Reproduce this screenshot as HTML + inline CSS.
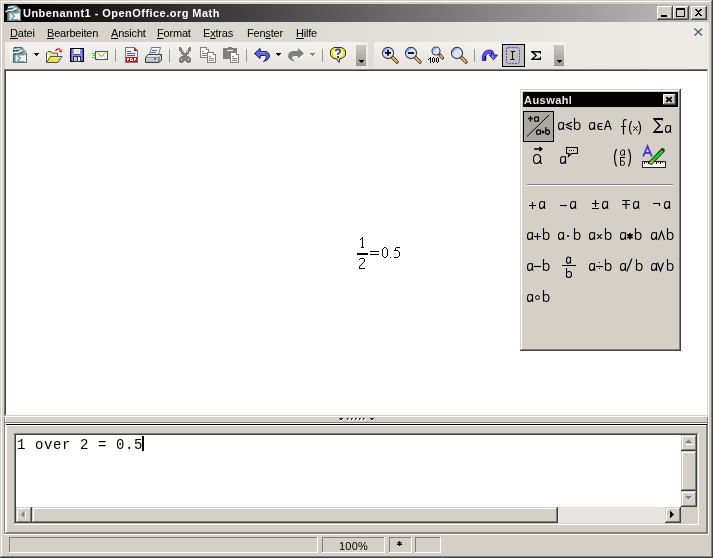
<!DOCTYPE html>
<html><head><meta charset="utf-8">
<style>
*{margin:0;padding:0;box-sizing:border-box}
html,body{width:713px;height:558px;overflow:hidden;background:#d4d0c8}
body{position:relative;font-family:"Liberation Sans",sans-serif;font-size:11px;color:#000}
.a{position:absolute}
.t{position:absolute;white-space:nowrap;line-height:1}
svg{position:absolute;overflow:visible}
.t{will-change:transform}
</style></head><body>
<div class="a" style="left:0px;top:0px;width:712px;height:1px;background:#d4d0c8"></div>
<div class="a" style="left:0px;top:0px;width:1px;height:557px;background:#d4d0c8"></div>
<div class="a" style="left:1px;top:1px;width:710px;height:1px;background:#fff"></div>
<div class="a" style="left:1px;top:1px;width:1px;height:555px;background:#fff"></div>
<div class="a" style="left:0px;top:557px;width:713px;height:1px;background:#404040"></div>
<div class="a" style="left:712px;top:0px;width:1px;height:558px;background:#404040"></div>
<div class="a" style="left:1px;top:556px;width:711px;height:1px;background:#808080"></div>
<div class="a" style="left:711px;top:1px;width:1px;height:556px;background:#808080"></div>
<div class="a" style="left:4px;top:4px;width:705px;height:18px;background:linear-gradient(to right,#000 0%,#c0c0c0 100%)"></div>
<svg style="left:6px;top:5px" width="16" height="16" viewBox="0 0 16 16" >
<defs><linearGradient id="mtt" x1="0" y1="0" x2="1" y2="0"><stop offset="0" stop-color="#1f4a52"/><stop offset="0.55" stop-color="#4a7076"/><stop offset="1" stop-color="#c0c8c8"/></linearGradient>
<linearGradient id="mlt" x1="0" y1="0" x2="1" y2="0"><stop offset="0" stop-color="#2a5c64"/><stop offset="1" stop-color="#c8d8d6"/></linearGradient></defs>
<path d="M1.5 15.5 L1.5 7 L14.5 7 L14.5 15.5 Z" fill="#f0f4f3" stroke="#3a6268" stroke-width="1"/>
<rect x="1" y="7" width="3.5" height="9" fill="url(#mlt)"/>
<path d="M1 7.5 L1 4 L2 0 L10 0 L15 5 L15 7.5 Z" fill="url(#mtt)"/>
<path d="M-0.5 6.8 Q3 4.6 5.5 5.6 Q8 4.2 10.5 3" fill="none" stroke="#fff" stroke-width="1.5"/>
<path d="M2 2.6 Q5 1.2 8.5 2.2" fill="none" stroke="#fff" stroke-width="1.3"/>
<path d="M5 7.8 L12.5 7.8 M5.5 8.5 L8.3 11.2 L5.5 14 M5 14.7 L12.5 14.7" fill="none" stroke="#7a9c8e" stroke-width="1.4"/>
<path d="M14.5 6 L14.5 15.5" stroke="#50707a" stroke-width="1"/>
<path d="M1 15.5 L15 15.5" stroke="#587a80" stroke-width="1"/>
</svg>
<div class="t" style="left:23px;top:8px;color:#fff;font-weight:bold;letter-spacing:0.46px">Unbenannt1 - OpenOffice.org Math</div>
<div class="a" style="left:657px;top:6px;width:16px;height:14px;background:#d4d0c8"></div>
<div class="a" style="left:657px;top:6px;width:15px;height:1px;background:#fff"></div>
<div class="a" style="left:657px;top:6px;width:1px;height:13px;background:#fff"></div>
<div class="a" style="left:657px;top:19px;width:16px;height:1px;background:#404040"></div>
<div class="a" style="left:672px;top:6px;width:1px;height:14px;background:#404040"></div>
<div class="a" style="left:658px;top:18px;width:14px;height:1px;background:#808080"></div>
<div class="a" style="left:671px;top:7px;width:1px;height:12px;background:#808080"></div>
<svg style="left:657px;top:6px" width="16" height="14" viewBox="0 0 16 14" shape-rendering="crispEdges"><rect x="4" y="9" width="6" height="2" fill="#000"/></svg>
<div class="a" style="left:673px;top:6px;width:16px;height:14px;background:#d4d0c8"></div>
<div class="a" style="left:673px;top:6px;width:15px;height:1px;background:#fff"></div>
<div class="a" style="left:673px;top:6px;width:1px;height:13px;background:#fff"></div>
<div class="a" style="left:673px;top:19px;width:16px;height:1px;background:#404040"></div>
<div class="a" style="left:688px;top:6px;width:1px;height:14px;background:#404040"></div>
<div class="a" style="left:674px;top:18px;width:14px;height:1px;background:#808080"></div>
<div class="a" style="left:687px;top:7px;width:1px;height:12px;background:#808080"></div>
<svg style="left:673px;top:6px" width="16" height="14" viewBox="0 0 16 14" shape-rendering="crispEdges"><rect x="3.5" y="2.5" width="8" height="8" fill="none" stroke="#000"/><rect x="3" y="2" width="9" height="2" fill="#000"/></svg>
<div class="a" style="left:691px;top:6px;width:16px;height:14px;background:#d4d0c8"></div>
<div class="a" style="left:691px;top:6px;width:15px;height:1px;background:#fff"></div>
<div class="a" style="left:691px;top:6px;width:1px;height:13px;background:#fff"></div>
<div class="a" style="left:691px;top:19px;width:16px;height:1px;background:#404040"></div>
<div class="a" style="left:706px;top:6px;width:1px;height:14px;background:#404040"></div>
<div class="a" style="left:692px;top:18px;width:14px;height:1px;background:#808080"></div>
<div class="a" style="left:705px;top:7px;width:1px;height:12px;background:#808080"></div>
<svg style="left:691px;top:6px" width="16" height="14" viewBox="0 0 16 14" shape-rendering="crispEdges"><path d="M4 3 L5.5 3 L7.5 5.5 L9.5 3 L11 3 L8.3 6.5 L11 10 L9.5 10 L7.5 7.5 L5.5 10 L4 10 L6.7 6.5 Z" fill="#000"/></svg>
<div class="a" style="left:4px;top:22px;width:705px;height:47px;background:linear-gradient(to right,#d4d0c8 0%,#dcd9d3 40%,#ebe8e4 80%,#eeebe7 100%)"></div>
<div class="t" style="left:10px;top:28px;letter-spacing:-0.2px"><span style="text-decoration:underline">D</span>atei</div>
<div class="t" style="left:47px;top:28px;letter-spacing:-0.2px"><span style="text-decoration:underline">B</span>earbeiten</div>
<div class="t" style="left:111px;top:28px;letter-spacing:-0.2px"><span style="text-decoration:underline">A</span>nsicht</div>
<div class="t" style="left:157px;top:28px;letter-spacing:-0.2px"><span style="text-decoration:underline">F</span>ormat</div>
<div class="t" style="left:203px;top:28px;letter-spacing:-0.2px">E<span style="text-decoration:underline">x</span>tras</div>
<div class="t" style="left:247px;top:28px;letter-spacing:-0.2px">Fen<span style="text-decoration:underline">s</span>ter</div>
<div class="t" style="left:296px;top:28px;letter-spacing:-0.2px"><span style="text-decoration:underline">H</span>ilfe</div>
<svg style="left:694px;top:28px" width="9" height="8" viewBox="0 0 9 8" ><path d="M0.5 0.5 L8 7.5 M8 0.5 L0.5 7.5" stroke="#545c7c" stroke-width="1.4"/></svg>
<div class="a" style="left:5px;top:42px;width:363px;height:27px;background:linear-gradient(#f4f2f0,#e6e3de)"></div>
<div class="a" style="left:374px;top:42px;width:192px;height:27px;background:linear-gradient(#f4f2f0,#e6e3de)"></div>
<svg style="left:12px;top:47px" width="16" height="16" viewBox="0 0 16 16" >
<defs><linearGradient id="mtb" x1="0" y1="0" x2="1" y2="0"><stop offset="0" stop-color="#1f4a52"/><stop offset="0.55" stop-color="#4a7076"/><stop offset="1" stop-color="#c0c8c8"/></linearGradient>
<linearGradient id="mlb" x1="0" y1="0" x2="1" y2="0"><stop offset="0" stop-color="#2a5c64"/><stop offset="1" stop-color="#c8d8d6"/></linearGradient></defs>
<path d="M1.5 15.5 L1.5 7 L14.5 7 L14.5 15.5 Z" fill="#f0f4f3" stroke="#3a6268" stroke-width="1"/>
<rect x="1" y="7" width="3.5" height="9" fill="url(#mlb)"/>
<path d="M1 7.5 L1 4 L2 0 L10 0 L15 5 L15 7.5 Z" fill="url(#mtb)"/>
<path d="M-0.5 6.8 Q3 4.6 5.5 5.6 Q8 4.2 10.5 3" fill="none" stroke="#fff" stroke-width="1.5"/>
<path d="M2 2.6 Q5 1.2 8.5 2.2" fill="none" stroke="#fff" stroke-width="1.3"/>
<path d="M5 7.8 L12.5 7.8 M5.5 8.5 L8.3 11.2 L5.5 14 M5 14.7 L12.5 14.7" fill="none" stroke="#7a9c8e" stroke-width="1.4"/>
<path d="M14.5 6 L14.5 15.5" stroke="#50707a" stroke-width="1"/>
<path d="M1 15.5 L15 15.5" stroke="#587a80" stroke-width="1"/>
</svg>
<svg style="left:34px;top:53px" width="5" height="3" viewBox="0 0 5 3" shape-rendering="crispEdges"><rect x="0" y="0" width="5" height="1" fill="#000"/><rect x="1" y="1" width="3" height="1" fill="#000"/><rect x="2" y="2" width="1" height="1" fill="#000"/></svg>
<svg style="left:45px;top:47px" width="18" height="16" viewBox="0 0 18 16" >
<path d="M1.5 15 L1.5 6 L3 4.5 L6 4.5 L7.2 6.2 L12.5 6.2 L12.5 9.5" fill="#f2ea78" stroke="#464e78" stroke-width="1"/>
<path d="M2.2 6.3 L2.2 14 L3.8 11.5 L3.8 6.3 Z" fill="#ffffff"/>
<path d="M1.5 15.5 L5.5 9.5 L17 9.5 L12.8 15.5 Z" fill="#ece63a" stroke="#464e78" stroke-width="1" stroke-linejoin="round"/>
<path d="M6.5 10.8 L15 10.8" stroke="#f8f490" stroke-width="1"/>
<path d="M10.5 3.8 Q12.8 0.8 15.4 2.6" fill="none" stroke="#e00000" stroke-width="1.1"/>
<path d="M13.8 4.6 L16.8 2.2 L16.6 5.8 Z" fill="#e00000"/>
</svg>
<svg style="left:69px;top:47px" width="16" height="16" viewBox="0 0 16 16" shape-rendering="crispEdges">
<rect x="1" y="1" width="14" height="14" fill="#000"/>
<rect x="2" y="2" width="12" height="12" fill="#5050e0"/>
<rect x="3" y="2" width="10" height="12" fill="#8888fc"/>
<rect x="5" y="2" width="6" height="6" fill="#4040d0"/>
<rect x="5" y="2" width="6" height="5" fill="#f8f8f0"/>
<rect x="6" y="3" width="4" height="3" fill="#e4e4e4"/>
<rect x="4" y="9" width="8" height="6" fill="#303038"/>
<rect x="5" y="10" width="3" height="4" fill="#c4c4cc"/>
<rect x="9" y="10" width="2" height="4" fill="#f8f8f8"/>
</svg>
<svg style="left:92px;top:47px" width="18" height="16" viewBox="0 0 18 16" >
<rect x="0" y="6" width="3" height="1" fill="#20d020"/>
<rect x="1" y="8" width="3" height="1" fill="#20d020"/>
<rect x="0" y="10" width="3" height="1" fill="#20d020"/>
<rect x="3.5" y="4.5" width="12" height="8" fill="#fffff0" stroke="#505670" stroke-width="1.1"/>
<path d="M4.5 5 L9.5 9.5 L14.5 5" fill="none" stroke="#68708a" stroke-width="1"/>
<path d="M4.5 12 L8 8.5 M14.5 12 L11 8.5" fill="none" stroke="#c8b860" stroke-width="0.9"/>
<rect x="4.5" y="5.5" width="10" height="1" fill="#f8f0a0"/>
</svg>
<div class="a" style="left:115px;top:49px;width:1px;height:13px;background:#9a9a9a"></div>
<svg style="left:124px;top:47px" width="16" height="16" viewBox="0 0 16 16" shape-rendering="crispEdges">
<path d="M1.5 0.5 L10.5 0.5 L13.5 3.5 L13.5 15.5 L1.5 15.5 Z" fill="#fff" stroke="#707888" stroke-width="1"/>
<path d="M10 1 L13 4 L10 4 Z" fill="#e80000"/>
<rect x="3" y="4" width="4" height="1" fill="#5050d0"/>
<rect x="3" y="6" width="8" height="1" fill="#5050d0"/>
<rect x="3" y="8" width="8" height="1" fill="#5050d0"/>
<rect x="2" y="10" width="11" height="5" fill="#e80000"/>
<g fill="#fff"><rect x="3" y="11" width="1" height="3"/><rect x="4" y="11" width="1" height="2"/>
<rect x="6" y="11" width="1" height="3"/><rect x="7" y="11" width="1" height="1"/><rect x="7" y="13" width="1" height="1"/><rect x="8" y="11.5" width="1" height="2"/>
<rect x="10" y="11" width="1" height="3"/><rect x="11" y="11" width="1" height="1"/><rect x="11" y="12" width="0.6" height="1"/></g>
</svg>
<svg style="left:145px;top:47px" width="18" height="16" viewBox="0 0 18 16" >
<defs><linearGradient id="prg" x1="0" y1="0" x2="0" y2="1"><stop offset="0" stop-color="#f0f0f4"/><stop offset="1" stop-color="#b4b8c4"/></linearGradient></defs>
<path d="M6.5 0.5 L15.5 0.5 L13.5 7.5 L4.5 7.5 Z" fill="#fff" stroke="#707480" stroke-width="1"/>
<rect x="7" y="3" width="5" height="1" fill="#5050d0"/>
<rect x="6" y="5" width="5" height="1" fill="#5050d0"/>
<path d="M0.5 10.5 L3 7.5 L16.5 7.5 L16.5 13 L14 15.5 L0.5 15.5 Z" fill="url(#prg)" stroke="#383840" stroke-width="1" stroke-linejoin="round"/>
<path d="M1 10.5 L14 10.5 L16 8" fill="none" stroke="#8a8e98" stroke-width="1"/>
<path d="M14 10.5 L14 15.5" stroke="#50545c" stroke-width="1"/>
<rect x="9" y="11" width="2" height="2" fill="#10c010"/>
</svg>
<div class="a" style="left:169px;top:49px;width:1px;height:13px;background:#9a9a9a"></div>
<svg style="left:177px;top:47px" width="16" height="16" viewBox="0 0 16 16" shape-rendering="crispEdges">
<path d="M2 0 L4 0 L8 7 L12 0 L14 0 L14 3 L10 9 L11 9 L14 11 L14 15 L12 16 L10 16 L8 13 L6 16 L4 16 L2 15 L2 11 L5 9 L6 9 L2 3 Z" fill="#808080"/>
<rect x="5" y="4" width="1" height="1" fill="#fff"/><rect x="10" y="4" width="1" height="1" fill="#fff"/>
<rect x="4" y="12" width="1" height="1" fill="#fff"/><rect x="11" y="12" width="1" height="1" fill="#fff"/>
</svg>
<svg style="left:200px;top:47px" width="18" height="17" viewBox="0 0 18 17" shape-rendering="crispEdges"><path d="M0.5 0.5 L6.5 0.5 L8.5 2.5 L8.5 10.5 L0.5 10.5 Z" fill="#fff" stroke="#808080" stroke-width="1"/>
<path d="M6 0 L9 3 L6 3 Z" fill="#808080"/><rect x="6.5" y="1" width="1" height="1" fill="#fff"/>
<rect x="2" y="4" width="2" height="1" fill="#808080"/><rect x="2" y="6" width="5" height="1" fill="#808080"/><rect x="2" y="8" width="5" height="1" fill="#808080"/><path d="M7.5 5.5 L13.5 5.5 L15.5 7.5 L15.5 15.5 L7.5 15.5 Z" fill="#fff" stroke="#808080" stroke-width="1"/>
<path d="M13 5 L16 8 L13 8 Z" fill="#808080"/><rect x="13.5" y="6" width="1" height="1" fill="#fff"/>
<rect x="9" y="9" width="2" height="1" fill="#808080"/><rect x="9" y="11" width="5" height="1" fill="#808080"/><rect x="9" y="13" width="5" height="1" fill="#808080"/></svg>
<svg style="left:222px;top:47px" width="18" height="17" viewBox="0 0 18 17" shape-rendering="crispEdges">
<rect x="1" y="1" width="14" height="11" rx="1.5" fill="#808080"/>
<rect x="6" y="0" width="4" height="2" fill="#808080"/>
<rect x="5" y="3" width="6" height="1" fill="#fff"/>
<path d="M8.5 5.5 L14.5 5.5 L16.5 7.5 L16.5 15.5 L8.5 15.5 Z" fill="#fff" stroke="#808080" stroke-width="1"/>
<path d="M14 5 L17 8 L14 8 Z" fill="#808080"/><rect x="14.5" y="6" width="1" height="1" fill="#fff"/>
<rect x="10" y="9" width="2" height="1" fill="#808080"/><rect x="10" y="11" width="5" height="1" fill="#808080"/><rect x="10" y="13" width="5" height="1" fill="#808080"/></svg>
<div class="a" style="left:246px;top:49px;width:1px;height:13px;background:#9a9a9a"></div>
<svg style="left:252px;top:46px" width="20" height="18" viewBox="0 0 20 18" >
<path d="M2.5 7.5 L8 2.5 L8.5 5.5 L13 5.5 Q17.5 5.8 17.5 10.5 Q17 14 11.5 15.5 Q14.5 13 14.5 11 Q14.5 9.5 12.5 9.5 L8.5 9.5 L8 12.5 Z" fill="#6060f0" stroke="#1c1c50" stroke-width="1" stroke-linejoin="round"/>
<path d="M8.5 6.5 L13 6.5" stroke="#9a9aff" stroke-width="1"/>
</svg>
<svg style="left:276px;top:53px" width="5" height="3" viewBox="0 0 5 3" shape-rendering="crispEdges"><rect x="0" y="0" width="5" height="1" fill="#000"/><rect x="1" y="1" width="3" height="1" fill="#000"/><rect x="2" y="2" width="1" height="1" fill="#000"/></svg>
<svg style="left:286px;top:46px" width="20" height="18" viewBox="0 0 20 18" >
<path d="M18 7.5 L12 2 L12 5 L7 5 Q2 5.5 2 10.5 Q2.5 14 9.5 15.5 Q6 13 6 11.5 Q6 10 8 10 L12 10 L12 12.5 Z" fill="#808080"/>
<path d="M18.5 8 L12.5 13 M9.5 15.5 L10 16" stroke="#fff" stroke-width="1"/>
</svg>
<svg style="left:310px;top:53px" width="5" height="3" viewBox="0 0 5 3" shape-rendering="crispEdges"><rect x="0" y="0" width="5" height="1" fill="#808080"/><rect x="1" y="1" width="3" height="1" fill="#808080"/><rect x="2" y="2" width="1" height="1" fill="#808080"/></svg>
<div class="a" style="left:322px;top:49px;width:1px;height:13px;background:#9a9a9a"></div>
<svg style="left:328px;top:46px" width="20" height="18" viewBox="0 0 20 18" >
<path d="M6 1.5 L13.5 1.5 L15.8 2.8 L17.5 5 L17.5 9 L15.8 11.2 L13.5 12.5 L11.8 12.5 L11.2 16.5 L8.5 12.8 L6 12.5 L3.8 11.2 L2.5 9 L2.5 5 L3.8 2.8 Z" fill="#f4ec00" stroke="#2c2c5c" stroke-width="1" stroke-linejoin="round"/>
<ellipse cx="10" cy="7" rx="5.2" ry="4.2" fill="#fffcc8"/>
<path d="M7.6 5.2 Q7.8 3.4 10 3.4 Q12.2 3.4 12.2 5.2 Q12.2 6.4 10.6 7.3 Q9.8 7.8 9.8 9" fill="none" stroke="#3434c8" stroke-width="1.7"/>
<rect x="9" y="10" width="2" height="2" fill="#3434c8"/>
</svg>
<div class="a" style="left:356px;top:45px;width:10px;height:21px;background:linear-gradient(#ccc9c4,#9a9894)"></div>
<svg style="left:359px;top:60px" width="5" height="3" viewBox="0 0 5 3" shape-rendering="crispEdges"><rect x="0" y="0" width="5" height="1" fill="#000"/><rect x="1" y="1" width="3" height="1" fill="#000"/><rect x="2" y="2" width="1" height="1" fill="#000"/></svg>
<svg style="left:380px;top:46px" width="20" height="18" viewBox="0 0 20 18" ><path d="M12 11 L17 16" stroke="#303030" stroke-width="3.3" stroke-linecap="round"/>
<path d="M12.5 11.5 L16.7 15.7" stroke="#f2b450" stroke-width="2" stroke-linecap="round"/>
<circle cx="8" cy="7" r="5.6000000000000005" fill="#d8e2ff" stroke="#3c3c4c" stroke-width="1.1"/>
<path d="M3.8 7 A4.2 4.2 0 0 1 8 2.8" fill="none" stroke="#6f80f0" stroke-width="1"/><path d="M5 6.8 L11 6.8 M8 3.8 L8 9.8" stroke="#000" stroke-width="1.7"/></svg>
<svg style="left:403px;top:46px" width="20" height="18" viewBox="0 0 20 18" ><path d="M12 11 L17 16" stroke="#303030" stroke-width="3.3" stroke-linecap="round"/>
<path d="M12.5 11.5 L16.7 15.7" stroke="#f2b450" stroke-width="2" stroke-linecap="round"/>
<circle cx="8" cy="7" r="5.6000000000000005" fill="#d8e2ff" stroke="#3c3c4c" stroke-width="1.1"/>
<path d="M3.8 7 A4.2 4.2 0 0 1 8 2.8" fill="none" stroke="#6f80f0" stroke-width="1"/><path d="M5 7 L11 7" stroke="#000" stroke-width="1.8"/></svg>
<svg style="left:425px;top:46px" width="20" height="18" viewBox="0 0 20 18" ><path d="M15 9 L17.5 12" stroke="#303030" stroke-width="3.3" stroke-linecap="round"/>
<path d="M15.5 9.5 L17.2 11.7" stroke="#f2b450" stroke-width="2" stroke-linecap="round"/>
<circle cx="11" cy="5" r="3.9999999999999996" fill="#d8e2ff" stroke="#3c3c4c" stroke-width="1.1"/>
<path d="M8.4 5 A2.5999999999999996 2.5999999999999996 0 0 1 11 2.4000000000000004" fill="none" stroke="#6f80f0" stroke-width="1"/></svg>
<svg style="left:0px;top:0px" width="1" height="1" viewBox="0 0 1 1" shape-rendering="crispEdges"><g fill="#000"><rect x="430" y="57" width="1" height="6"/><rect x="429" y="58" width="1" height="1"/><rect x="428" y="59" width="1" height="1"/><rect x="432" y="58" width="1" height="4"/><rect x="434" y="58" width="1" height="4"/><rect x="433" y="57" width="1" height="1"/><rect x="433" y="62" width="1" height="1"/><rect x="436" y="58" width="1" height="4"/><rect x="438" y="58" width="1" height="4"/><rect x="437" y="57" width="1" height="1"/><rect x="437" y="62" width="1" height="1"/></g></svg>
<svg style="left:449px;top:46px" width="20" height="18" viewBox="0 0 20 18" ><path d="M12 11 L17 16" stroke="#303030" stroke-width="3.3" stroke-linecap="round"/>
<path d="M12.5 11.5 L16.7 15.7" stroke="#f2b450" stroke-width="2" stroke-linecap="round"/>
<circle cx="8" cy="7" r="5.6000000000000005" fill="#d8e2ff" stroke="#3c3c4c" stroke-width="1.1"/>
<path d="M3.8 7 A4.2 4.2 0 0 1 8 2.8" fill="none" stroke="#6f80f0" stroke-width="1"/></svg>
<div class="a" style="left:474px;top:49px;width:1px;height:13px;background:#9a9a9a"></div>
<svg style="left:480px;top:46px" width="20" height="18" viewBox="0 0 20 18" >
<path d="M2.2 14.5 Q1.5 8.5 4.8 5.5 Q7.5 3.8 10.5 4 Q13.2 4.4 13.8 7.5 L14 9 L17.5 9 L13.5 13.8 L9.2 9 L11.5 9 Q11.2 7 9 7 Q6.5 7.2 5.8 10 L5.8 14.5 Z" fill="#5c58f0" stroke="#3020b0" stroke-width="1" stroke-linejoin="round"/>
<path d="M5 10 L5 14" stroke="#000" stroke-width="1.2"/>
<path d="M11.5 6.5 L11.5 8.5" stroke="#000" stroke-width="1"/>
<path d="M12.5 10 L12.5 11.5" stroke="#b0b0ff" stroke-width="1"/>
</svg>
<div class="a" style="left:502px;top:44px;width:23px;height:23px;background:#c3c1bc;border:1px solid #000"></div>
<svg style="left:502px;top:44px" width="23" height="23" viewBox="0 0 23 23" >
<rect x="4.5" y="3.5" width="13" height="16" rx="2" fill="none" stroke="#4848e8" stroke-width="1" stroke-dasharray="2 1"/>
<path d="M9 7.5 L13 7.5 M10.5 7.5 L10.5 16 M8.5 15.5 L12.5 15.5" stroke="#000" stroke-width="1"/>
</svg>
<svg style="left:531px;top:51px" width="10" height="9" viewBox="0 0 10 9" ><path d="M0 0 L10 0 L10 3 L9.3 3 Q8.8 1.6 7.2 1.6 L3.2 1.6 L6.2 4.6 L2.6 7.6 L7.2 7.6 Q8.8 7.6 9.3 5.8 L10 5.8 L10 9 L0 9 L0 8.2 L4.3 4.6 L0 0.9 Z" fill="#000"/></svg>
<div class="a" style="left:554px;top:45px;width:10px;height:21px;background:linear-gradient(#ccc9c4,#9a9894)"></div>
<svg style="left:557px;top:60px" width="5" height="3" viewBox="0 0 5 3" shape-rendering="crispEdges"><rect x="0" y="0" width="5" height="1" fill="#000"/><rect x="1" y="1" width="3" height="1" fill="#000"/><rect x="2" y="2" width="1" height="1" fill="#000"/></svg>
<div class="a" style="left:4px;top:69px;width:705px;height:348px;background:#fff"></div>
<div class="a" style="left:4px;top:69px;width:704px;height:1px;background:#808080"></div>
<div class="a" style="left:4px;top:69px;width:1px;height:347px;background:#808080"></div>
<div class="a" style="left:5px;top:70px;width:702px;height:1px;background:#404040"></div>
<div class="a" style="left:5px;top:70px;width:1px;height:345px;background:#404040"></div>
<div class="a" style="left:4px;top:416px;width:705px;height:1px;background:#fff"></div>
<div class="a" style="left:708px;top:69px;width:1px;height:348px;background:#fff"></div>
<div class="a" style="left:5px;top:415px;width:703px;height:1px;background:#d4d0c8"></div>
<div class="a" style="left:707px;top:70px;width:1px;height:346px;background:#d4d0c8"></div>
<svg style="left:355px;top:235px" width="50" height="40" viewBox="0 0 50 40" shape-rendering="crispEdges"><g fill="#000"><rect x="7" y="2" width="1" height="11"/><rect x="6" y="3" width="1" height="1"/><rect x="5" y="4" width="1" height="1"/><rect x="6" y="12" width="3" height="1"/><rect x="2" y="18" width="11" height="2"/><rect x="5" y="23" width="4" height="1"/><rect x="4" y="24" width="1" height="1"/><rect x="9" y="24" width="1" height="1"/><rect x="9" y="25" width="1" height="2"/><rect x="8" y="27" width="1" height="1"/><rect x="7" y="28" width="1" height="1"/><rect x="6" y="29" width="1" height="1"/><rect x="5" y="30" width="1" height="1"/><rect x="4" y="31" width="1" height="2"/><rect x="4" y="33" width="6" height="1"/><rect x="15" y="16" width="9" height="1"/><rect x="15" y="19" width="9" height="1"/><rect x="29" y="12" width="2" height="1"/><rect x="28" y="13" width="1" height="1"/><rect x="31" y="13" width="1" height="1"/><rect x="27" y="14" width="1" height="7"/><rect x="32" y="14" width="1" height="7"/><rect x="28" y="21" width="1" height="1"/><rect x="31" y="21" width="1" height="1"/><rect x="29" y="22" width="2" height="1"/><rect x="35" y="22" width="1" height="1"/><rect x="41" y="12" width="4" height="1"/><rect x="40" y="13" width="1" height="2"/><rect x="39" y="15" width="4" height="1"/><rect x="43" y="16" width="1" height="1"/><rect x="44" y="17" width="1" height="4"/><rect x="43" y="21" width="1" height="1"/><rect x="39" y="22" width="4" height="1"/></g></svg>
<div class="a" style="left:520px;top:89px;width:161px;height:262px;background:#d4d0c8"></div>
<div class="a" style="left:520px;top:89px;width:160px;height:1px;background:#d4d0c8"></div>
<div class="a" style="left:520px;top:89px;width:1px;height:261px;background:#d4d0c8"></div>
<div class="a" style="left:521px;top:90px;width:158px;height:1px;background:#fff"></div>
<div class="a" style="left:521px;top:90px;width:1px;height:259px;background:#fff"></div>
<div class="a" style="left:520px;top:350px;width:161px;height:1px;background:#404040"></div>
<div class="a" style="left:680px;top:89px;width:1px;height:262px;background:#404040"></div>
<div class="a" style="left:521px;top:349px;width:159px;height:1px;background:#808080"></div>
<div class="a" style="left:679px;top:90px;width:1px;height:260px;background:#808080"></div>
<div class="a" style="left:523px;top:92px;width:155px;height:15px;background:#000"></div>
<div class="t" style="left:524px;top:95px;color:#e8e8e8;font-weight:bold;letter-spacing:0.45px">Auswahl</div>
<div class="a" style="left:663px;top:94px;width:13px;height:11px;background:#d4d0c8"></div>
<div class="a" style="left:663px;top:94px;width:12px;height:1px;background:#fff"></div>
<div class="a" style="left:663px;top:94px;width:1px;height:10px;background:#fff"></div>
<div class="a" style="left:663px;top:104px;width:13px;height:1px;background:#404040"></div>
<div class="a" style="left:675px;top:94px;width:1px;height:11px;background:#404040"></div>
<div class="a" style="left:664px;top:103px;width:11px;height:1px;background:#808080"></div>
<div class="a" style="left:674px;top:95px;width:1px;height:9px;background:#808080"></div>
<svg style="left:663px;top:94px" width="13" height="11" viewBox="0 0 13 11" ><path d="M3.2 3.2 L8.8 7.8 M8.8 3.2 L3.2 7.8" stroke="#000" stroke-width="1.9"/></svg>
<div class="a" style="left:523px;top:111px;width:31px;height:31px;background:#aaa8a2;border:1px solid #000"></div>
<svg style="left:523px;top:111px" width="31" height="31" viewBox="0 0 31 31" ><g fill="none" stroke="#000">
<path d="M5 7.5 L10 7.5 M7.5 5 L7.5 10.5" stroke-width="1.3"/>
<path d="M15.5 6.5 C15 6 14.3 5.8 13.5 5.8 C12 5.8 11.5 7 11.5 8.2 C11.5 9.6 12.2 10.5 13.2 10.5 C14.3 10.5 15 9.5 15.5 8.5 M15.5 5.8 L15.5 10.5" stroke-width="1.2"/>
<path d="M4 25.5 L26 4" stroke-width="1"/>
<path d="M17.5 19.5 C17 19 16.3 18.8 15.5 18.8 C14 18.8 13.5 20 13.5 21.2 C13.5 22.6 14.2 23.5 15.2 23.5 C16.3 23.5 17 22.5 17.5 21.5 M17.5 18.8 L17.5 23.5" stroke-width="1.2"/>
<path d="M18.5 21 L21.5 21 M20 19.5 L20 22.5" stroke-width="1.3"/>
<path d="M22.8 16 L22.8 23.2 M22.8 20 C23.3 19 24 18.8 24.8 18.8 C26 18.8 26.5 19.8 26.5 21.2 C26.5 22.6 25.8 23.3 24.8 23.3 C24 23.3 23.3 22.8 22.8 22.3" stroke-width="1.2"/>
</g></svg>
<div class="a" style="left:527px;top:184px;width:146px;height:1px;background:#808080"></div>
<div class="a" style="left:527px;top:185px;width:146px;height:1px;background:#fff"></div>
<svg style="left:520px;top:89px" width="161" height="262" viewBox="0 0 161 262" ><g fill="none" stroke="#000" stroke-linecap="butt"><path d="M 43.5 34.8 C 43 33.5 42 33.5 41 33.5 C 39.2 33.5 38.5 35.4 38.5 37.2 C 38.5 39.2 39.2 40.5 40.4 40.5 C 41.8 40.5 43 39 43.5 37.4" stroke-width="1.15"/><path d="M 43.5 33.2 L 43.5 39.4 Q 43.5 40.5 44.3 40.5" stroke-width="1.15"/><path d="M 51.9 33.2 L 46.2 35.6 L 51.9 38 M 46.2 38.2 L 51.9 40.6" stroke-width="1.15"/><path d="M 54.5 29 L 54.5 40.5" stroke-width="1.15"/><path d="M 54.5 35 C 55.3 33.5 56.3 33.5 57.3 33.5 C 59.2 33.5 60 35 60 37 C 60 39.2 59 40.5 57.3 40.5 C 56.2 40.5 55.2 40 54.5 39" stroke-width="1.15"/><path d="M 74.5 34.8 C 74 33.5 73 33.5 72 33.5 C 70.2 33.5 69.5 35.4 69.5 37.2 C 69.5 39.2 70.2 40.5 71.4 40.5 C 72.8 40.5 74 39 74.5 37.4" stroke-width="1.15"/><path d="M 74.5 33.2 L 74.5 39.4 Q 74.5 40.5 75.3 40.5" stroke-width="1.15"/><path d="M 82.5 34.5 L 80 34.5 Q 77.8 34.5 77.8 37.5 Q 77.8 40.5 80 40.5 L 82.5 40.5 M 78 37.5 L 82 37.5" stroke-width="1.15"/><path d="M 84.5 40.8 L 87.2 32.2 Q 87.8 31.2 88.4 32.2 L 91.1 40.8 M 85.8 37.5 L 89.8 37.5" stroke-width="1.15"/><path d="M 101 37.5 L 106 37.5 M 103.5 45.5 L 103.5 32.5 Q 103.5 30.5 105.3 30.5 L 106.5 31" stroke-width="1.15"/><path d="M 111.5 32 Q 109.5 35.5 109.5 39.5 Q 109.5 43 111.5 45.5" stroke-width="1.15"/><path d="M 113.3 37.2 L 117.7 41.8 M 117.7 37.2 L 113.3 41.8" stroke-width="1.0"/><path d="M 118.5 32 Q 120.5 35.5 120.5 39.5 Q 120.5 43 118.5 45.5" stroke-width="1.15"/><path transform="translate(133,29)" d="M0 0 L10 0 L10 2.6 L9.4 2.6 Q9.2 1.9 8.4 1.9 L2.5 1.9 L7.9 7.5 L2.5 13.1 L8.4 13.1 Q9.2 13.1 9.4 12.4 L10 12.4 L10 15 L0 15 L0 14.3 L5.8 7.5 L0 0.7 Z" fill="#000" stroke="none"/><path d="M 150.5 37.8 C 150 36.5 149 36.5 148 36.5 C 146.2 36.5 145.5 38.4 145.5 40.2 C 145.5 42.2 146.2 43.5 147.4 43.5 C 148.8 43.5 150 42 150.5 40.4" stroke-width="1.15"/><path d="M 150.5 36.2 L 150.5 42.4 Q 150.5 43.5 151.3 43.5" stroke-width="1.15"/><path d="M 20.5 67 L 20.5 73.5 Q 20.5 74.5 22 74.5 M 20.5 69 C 20 66 18.5 65.5 17 65.5 C 14.5 65.5 13.5 68 13.5 70.2 C 13.5 73 14.5 74.5 16.3 74.5 C 18.2 74.5 20 72.5 20.5 70.5" stroke-width="1.2"/><path d="M 14 60 L 21.5 60 M 19.3 58 L 21.8 60 L 19.3 62" stroke-width="1.5"/><path d="M 45.5 68.8 C 45 67.5 44 67.5 43 67.5 C 41.2 67.5 40.5 69.4 40.5 71.2 C 40.5 73.2 41.2 74.5 42.4 74.5 C 43.8 74.5 45 73 45.5 71.4" stroke-width="1.15"/><path d="M 45.5 67.2 L 45.5 73.4 Q 45.5 74.5 46.3 74.5" stroke-width="1.15"/><path d="M 46.5 58.5 L 57 58.5 L 57.5 59 L 57.5 64 L 57 64.5 L 51.5 64.5 L 48.5 67.5 L 49 64.5 L 47 64.5 L 46.5 64 Z" stroke-width="1.1"/><rect x="49" y="61" width="1" height="1" fill="#000" stroke="none"/><rect x="51" y="61" width="1" height="1" fill="#000" stroke="none"/><rect x="53" y="61" width="1" height="1" fill="#000" stroke="none"/><path d="M 96.5 60 Q 94.5 64 94.5 68.5 Q 94.5 73.5 96.5 77.5" stroke-width="1.2"/><path d="M 108.5 60 Q 110.5 64 110.5 68.5 Q 110.5 73.5 108.5 77.5" stroke-width="1.2"/><path d="M 104.5 62 C 104 61 103.3 61 102.5 61 C 101 61 100.5 62.5 100.5 64 C 100.5 65.5 101 66.5 102 66.5 C 103 66.5 104 65.5 104.5 64 M 104.5 61 L 104.5 66.5" stroke-width="1.0"/><rect x="100" y="68" width="5" height="1" fill="#000" stroke="none"/><path d="M 100.5 69 L 100.5 76.5 M 100.5 73 C 101 72 101.8 72 102.5 72 C 104 72 104.5 73 104.5 74.2 C 104.5 75.7 103.8 76.5 102.5 76.5 C 101.5 76.5 101 76 100.5 75.5" stroke-width="1.0"/><g transform="translate(122,56)"><path d="M1.2 11.5 L5.5 1.2 L9.8 11.5 M2.8 8 L8.2 8" stroke="#4a3cc4" stroke-width="1.9"/><rect x="0.5" y="16.5" width="23" height="6" fill="#fff" stroke="#202020" stroke-width="1"/><path d="M2.5 17 L2.5 19 M4.5 17 L4.5 18 M6.5 17 L6.5 19 M8.5 17 L8.5 18 M14.5 17 L14.5 19 M16.5 17 L16.5 18 M18.5 17 L18.5 19 M20.5 17 L20.5 18" stroke="#202020" stroke-width="1"/><path d="M9 17.5 L20.5 5.5" stroke="#104010" stroke-width="4.6" stroke-linecap="round"/><path d="M9.5 17 L20.5 5.8" stroke="#20d020" stroke-width="2.6"/><path d="M8 18.8 L10.5 16" stroke="#e0a050" stroke-width="2.2"/></g><path d="M 9 116.5 L 16 116.5 M 12.5 113 L 12.5 120" stroke-width="1.15"/><path d="M 24.5 113.8 C 24 112.5 23 112.5 22 112.5 C 20.2 112.5 19.5 114.4 19.5 116.2 C 19.5 118.2 20.2 119.5 21.4 119.5 C 22.8 119.5 24 118 24.5 116.4" stroke-width="1.15"/><path d="M 24.5 112.2 L 24.5 118.4 Q 24.5 119.5 25.3 119.5" stroke-width="1.15"/><path d="M 40 116.5 L 47 116.5" stroke-width="1.15"/><path d="M 55.5 113.8 C 55 112.5 54 112.5 53 112.5 C 51.2 112.5 50.5 114.4 50.5 116.2 C 50.5 118.2 51.2 119.5 52.4 119.5 C 53.8 119.5 55 118 55.5 116.4" stroke-width="1.15"/><path d="M 55.5 112.2 L 55.5 118.4 Q 55.5 119.5 56.3 119.5" stroke-width="1.15"/><path d="M 72 114.5 L 79 114.5 M 75.5 111 L 75.5 118 M 72 119.5 L 79 119.5" stroke-width="1.15"/><path d="M 87.5 113.8 C 87 112.5 86 112.5 85 112.5 C 83.2 112.5 82.5 114.4 82.5 116.2 C 82.5 118.2 83.2 119.5 84.4 119.5 C 85.8 119.5 87 118 87.5 116.4" stroke-width="1.15"/><path d="M 87.5 112.2 L 87.5 118.4 Q 87.5 119.5 88.3 119.5" stroke-width="1.15"/><path d="M 102 111.5 L 110 111.5 M 102 115.5 L 110 115.5 M 106 112 L 106 120" stroke-width="1.15"/><path d="M 118.5 113.8 C 118 112.5 117 112.5 116 112.5 C 114.2 112.5 113.5 114.4 113.5 116.2 C 113.5 118.2 114.2 119.5 115.4 119.5 C 116.8 119.5 118 118 118.5 116.4" stroke-width="1.15"/><path d="M 118.5 112.2 L 118.5 118.4 Q 118.5 119.5 119.3 119.5" stroke-width="1.15"/><path d="M 133 114.5 L 139.5 114.5 L 139.5 117" stroke-width="1.15"/><path d="M 149.5 113.8 C 149 112.5 148 112.5 147 112.5 C 145.2 112.5 144.5 114.4 144.5 116.2 C 144.5 118.2 145.2 119.5 146.4 119.5 C 147.8 119.5 149 118 149.5 116.4" stroke-width="1.15"/><path d="M 149.5 112.2 L 149.5 118.4 Q 149.5 119.5 150.3 119.5" stroke-width="1.15"/><path d="M 12.5 144.8 C 12 143.5 11 143.5 10 143.5 C 8.2 143.5 7.5 145.4 7.5 147.2 C 7.5 149.2 8.2 150.5 9.4 150.5 C 10.8 150.5 12 149 12.5 147.4" stroke-width="1.15"/><path d="M 12.5 143.2 L 12.5 149.4 Q 12.5 150.5 13.3 150.5" stroke-width="1.15"/><path d="M 14 147.5 L 21 147.5 M 17.5 144 L 17.5 151" stroke-width="1.15"/><path d="M 23.5 139 L 23.5 150.5" stroke-width="1.15"/><path d="M 23.5 145 C 24.3 143.5 25.3 143.5 26.3 143.5 C 28.2 143.5 29 145 29 147 C 29 149.2 28 150.5 26.3 150.5 C 25.2 150.5 24.2 150 23.5 149" stroke-width="1.15"/><path d="M 43.5 144.8 C 43 143.5 42 143.5 41 143.5 C 39.2 143.5 38.5 145.4 38.5 147.2 C 38.5 149.2 39.2 150.5 40.4 150.5 C 41.8 150.5 43 149 43.5 147.4" stroke-width="1.15"/><path d="M 43.5 143.2 L 43.5 149.4 Q 43.5 150.5 44.3 150.5" stroke-width="1.15"/><rect x="47" y="146" width="2" height="2" fill="#333" stroke="none"/><path d="M 54.5 139 L 54.5 150.5" stroke-width="1.15"/><path d="M 54.5 145 C 55.3 143.5 56.3 143.5 57.3 143.5 C 59.2 143.5 60 145 60 147 C 60 149.2 59 150.5 57.3 150.5 C 56.2 150.5 55.2 150 54.5 149" stroke-width="1.15"/><path d="M 74.5 144.8 C 74 143.5 73 143.5 72 143.5 C 70.2 143.5 69.5 145.4 69.5 147.2 C 69.5 149.2 70.2 150.5 71.4 150.5 C 72.8 150.5 74 149 74.5 147.4" stroke-width="1.15"/><path d="M 74.5 143.2 L 74.5 149.4 Q 74.5 150.5 75.3 150.5" stroke-width="1.15"/><path d="M 77.3 145.2 L 81.7 149.8 M 81.7 145.2 L 77.3 149.8" stroke-width="1.1"/><path d="M 85.5 139 L 85.5 150.5" stroke-width="1.15"/><path d="M 85.5 145 C 86.3 143.5 87.3 143.5 88.3 143.5 C 90.2 143.5 91 145 91 147 C 91 149.2 90 150.5 88.3 150.5 C 87.2 150.5 86.2 150 85.5 149" stroke-width="1.15"/><path d="M 105.5 144.8 C 105 143.5 104 143.5 103 143.5 C 101.2 143.5 100.5 145.4 100.5 147.2 C 100.5 149.2 101.2 150.5 102.4 150.5 C 103.8 150.5 105 149 105.5 147.4" stroke-width="1.15"/><path d="M 105.5 143.2 L 105.5 149.4 Q 105.5 150.5 106.3 150.5" stroke-width="1.15"/><path d="M 110 144 L 110 150.5 M 107.3 145.5 L 112.7 149 M 112.7 145.5 L 107.3 149" stroke-width="1.7"/><circle cx="110" cy="147.2" r="1.5" fill="#000" stroke="none"/><path d="M 115.5 139 L 115.5 150.5" stroke-width="1.15"/><path d="M 115.5 145 C 116.3 143.5 117.3 143.5 118.3 143.5 C 120.2 143.5 121 145 121 147 C 121 149.2 120 150.5 118.3 150.5 C 117.2 150.5 116.2 150 115.5 149" stroke-width="1.15"/><path d="M 136.5 144.8 C 136 143.5 135 143.5 134 143.5 C 132.2 143.5 131.5 145.4 131.5 147.2 C 131.5 149.2 132.2 150.5 133.4 150.5 C 134.8 150.5 136 149 136.5 147.4" stroke-width="1.15"/><path d="M 136.5 143.2 L 136.5 149.4 Q 136.5 150.5 137.3 150.5" stroke-width="1.15"/><path d="M 138.5 151 L 141.5 142.5 L 144.5 151" stroke-width="1.15"/><path d="M 147.5 139 L 147.5 150.5" stroke-width="1.15"/><path d="M 147.5 145 C 148.3 143.5 149.3 143.5 150.3 143.5 C 152.2 143.5 153 145 153 147 C 153 149.2 152 150.5 150.3 150.5 C 149.2 150.5 148.2 150 147.5 149" stroke-width="1.15"/><path d="M 12.5 175.8 C 12 174.5 11 174.5 10 174.5 C 8.2 174.5 7.5 176.4 7.5 178.2 C 7.5 180.2 8.2 181.5 9.4 181.5 C 10.8 181.5 12 180 12.5 178.4" stroke-width="1.15"/><path d="M 12.5 174.2 L 12.5 180.4 Q 12.5 181.5 13.3 181.5" stroke-width="1.15"/><path d="M 14 177.5 L 21 177.5" stroke-width="1.15"/><path d="M 23.5 170 L 23.5 181.5" stroke-width="1.15"/><path d="M 23.5 176 C 24.3 174.5 25.3 174.5 26.3 174.5 C 28.2 174.5 29 176 29 178 C 29 180.2 28 181.5 26.3 181.5 C 25.2 181.5 24.2 181 23.5 180" stroke-width="1.15"/><path d="M 50.5 169.5 C 50 168.5 49.3 168 48.5 168 C 47 168 46.5 169.5 46.5 171.5 C 46.5 173.2 47 174.5 48.2 174.5 C 49.4 174.5 50 173.5 50.5 172 M 50.5 168 L 50.5 174.5" stroke-width="1.1"/><rect x="42" y="176" width="14" height="1" fill="#000" stroke="none"/><path d="M 46.5 179 L 46.5 188.5 M 46.5 184 C 47 182.7 48 182.5 49 182.5 C 50.8 182.5 51.5 183.7 51.5 185.5 C 51.5 187.5 50.5 188.5 49 188.5 C 48 188.5 47 188 46.5 187.2" stroke-width="1.1"/><path d="M 74.5 175.8 C 74 174.5 73 174.5 72 174.5 C 70.2 174.5 69.5 176.4 69.5 178.2 C 69.5 180.2 70.2 181.5 71.4 181.5 C 72.8 181.5 74 180 74.5 178.4" stroke-width="1.15"/><path d="M 74.5 174.2 L 74.5 180.4 Q 74.5 181.5 75.3 181.5" stroke-width="1.15"/><path d="M 76 177.5 L 83 177.5" stroke-width="1.15"/><rect x="79" y="173" width="1" height="1" fill="#000" stroke="none"/><rect x="79" y="179" width="1" height="1" fill="#000" stroke="none"/><path d="M 85.5 170 L 85.5 181.5" stroke-width="1.15"/><path d="M 85.5 176 C 86.3 174.5 87.3 174.5 88.3 174.5 C 90.2 174.5 91 176 91 178 C 91 180.2 90 181.5 88.3 181.5 C 87.2 181.5 86.2 181 85.5 180" stroke-width="1.15"/><path d="M 105.5 175.8 C 105 174.5 104 174.5 103 174.5 C 101.2 174.5 100.5 176.4 100.5 178.2 C 100.5 180.2 101.2 181.5 102.4 181.5 C 103.8 181.5 105 180 105.5 178.4" stroke-width="1.15"/><path d="M 105.5 174.2 L 105.5 180.4 Q 105.5 181.5 106.3 181.5" stroke-width="1.15"/><path d="M 106.8 182.5 L 112 169.5" stroke-width="1.15"/><path d="M 116.5 170 L 116.5 181.5" stroke-width="1.15"/><path d="M 116.5 176 C 117.3 174.5 118.3 174.5 119.3 174.5 C 121.2 174.5 122 176 122 178 C 122 180.2 121 181.5 119.3 181.5 C 118.2 181.5 117.2 181 116.5 180" stroke-width="1.15"/><path d="M 136.5 175.8 C 136 174.5 135 174.5 134 174.5 C 132.2 174.5 131.5 176.4 131.5 178.2 C 131.5 180.2 132.2 181.5 133.4 181.5 C 134.8 181.5 136 180 136.5 178.4" stroke-width="1.15"/><path d="M 136.5 174.2 L 136.5 180.4 Q 136.5 181.5 137.3 181.5" stroke-width="1.15"/><path d="M 137.5 173.5 L 140.5 181.8 L 143.5 173.5" stroke-width="1.15"/><path d="M 147.5 170 L 147.5 181.5" stroke-width="1.15"/><path d="M 147.5 176 C 148.3 174.5 149.3 174.5 150.3 174.5 C 152.2 174.5 153 176 153 178 C 153 180.2 152 181.5 150.3 181.5 C 149.2 181.5 148.2 181 147.5 180" stroke-width="1.15"/><path d="M 12.5 206.8 C 12 205.5 11 205.5 10 205.5 C 8.2 205.5 7.5 207.4 7.5 209.2 C 7.5 211.2 8.2 212.5 9.4 212.5 C 10.8 212.5 12 211 12.5 209.4" stroke-width="1.15"/><path d="M 12.5 205.2 L 12.5 211.4 Q 12.5 212.5 13.3 212.5" stroke-width="1.15"/><circle cx="17.5" cy="208.5" r="2" fill="none" stroke="#000" stroke-width="1"/><path d="M 23.5 201 L 23.5 212.5" stroke-width="1.15"/><path d="M 23.5 207 C 24.3 205.5 25.3 205.5 26.3 205.5 C 28.2 205.5 29 207 29 209 C 29 211.2 28 212.5 26.3 212.5 C 25.2 212.5 24.2 212 23.5 211" stroke-width="1.15"/></g></svg>
<div class="a" style="left:4px;top:417px;width:705px;height:118px;background:#d4d0c8"></div>
<div class="a" style="left:4px;top:417px;width:1px;height:117px;background:#808080"></div>
<div class="a" style="left:5px;top:417px;width:1px;height:116px;background:#fff"></div>
<div class="a" style="left:707px;top:417px;width:1px;height:117px;background:#808080"></div>
<div class="a" style="left:708px;top:417px;width:1px;height:118px;background:#fff"></div>
<svg style="left:330px;top:410px" width="60" height="15" viewBox="0 0 60 15" shape-rendering="crispEdges"><rect x="9" y="8" width="4" height="1" fill="#303030"/><rect x="10" y="9" width="2" height="1" fill="#303030"/><rect x="12" y="9" width="1" height="1" fill="#fff"/><rect x="11" y="10" width="1" height="1" fill="#fff"/><rect x="40" y="8" width="4" height="1" fill="#303030"/><rect x="41" y="9" width="2" height="1" fill="#303030"/><rect x="43" y="9" width="1" height="1" fill="#fff"/><rect x="42" y="10" width="1" height="1" fill="#fff"/><rect x="17" y="8" width="2" height="1" fill="#404040"/><rect x="17" y="9" width="1" height="1" fill="#404040"/><rect x="19" y="8" width="1" height="2" fill="#fff"/><rect x="18" y="9" width="1" height="2" fill="#fff"/><rect x="21" y="8" width="2" height="1" fill="#404040"/><rect x="21" y="9" width="1" height="1" fill="#404040"/><rect x="23" y="8" width="1" height="2" fill="#fff"/><rect x="22" y="9" width="1" height="2" fill="#fff"/><rect x="25" y="8" width="2" height="1" fill="#404040"/><rect x="25" y="9" width="1" height="1" fill="#404040"/><rect x="27" y="8" width="1" height="2" fill="#fff"/><rect x="26" y="9" width="1" height="2" fill="#fff"/><rect x="29" y="8" width="2" height="1" fill="#404040"/><rect x="29" y="9" width="1" height="1" fill="#404040"/><rect x="31" y="8" width="1" height="2" fill="#fff"/><rect x="30" y="9" width="1" height="2" fill="#fff"/><rect x="33" y="8" width="2" height="1" fill="#404040"/><rect x="33" y="9" width="1" height="1" fill="#404040"/><rect x="35" y="8" width="1" height="2" fill="#fff"/><rect x="34" y="9" width="1" height="2" fill="#fff"/></svg>
<div class="a" style="left:4px;top:422px;width:703px;height:1px;background:#808080"></div>
<div class="a" style="left:5px;top:423px;width:702px;height:1px;background:#fff"></div>
<div class="a" style="left:6px;top:424px;width:701px;height:1px;background:#000"></div>
<div class="a" style="left:6px;top:425px;width:700px;height:1px;background:#fff"></div>
<div class="a" style="left:6px;top:425px;width:1px;height:107px;background:#fff"></div>
<div class="a" style="left:706px;top:425px;width:1px;height:107px;background:#808080"></div>
<div class="a" style="left:6px;top:532px;width:701px;height:1px;background:#808080"></div>
<div class="a" style="left:4px;top:533px;width:704px;height:1px;background:#808080"></div>
<div class="a" style="left:4px;top:534px;width:705px;height:1px;background:#fff"></div>
<div class="a" style="left:14px;top:433px;width:685px;height:92px;background:#fff"></div>
<div class="a" style="left:14px;top:433px;width:684px;height:1px;background:#808080"></div>
<div class="a" style="left:14px;top:433px;width:1px;height:91px;background:#808080"></div>
<div class="a" style="left:15px;top:434px;width:682px;height:1px;background:#404040"></div>
<div class="a" style="left:15px;top:434px;width:1px;height:89px;background:#404040"></div>
<div class="a" style="left:14px;top:524px;width:685px;height:1px;background:#fff"></div>
<div class="a" style="left:698px;top:433px;width:1px;height:92px;background:#fff"></div>
<div class="a" style="left:15px;top:523px;width:683px;height:1px;background:#d4d0c8"></div>
<div class="a" style="left:697px;top:434px;width:1px;height:90px;background:#d4d0c8"></div>
<div class="t" style="left:17px;top:438px;font-family:'Liberation Mono',monospace;font-size:14px;letter-spacing:0.6px">1 over 2 = 0.5</div>
<div class="a" style="left:142px;top:436px;width:2px;height:15px;background:#000"></div>
<div class="a" style="left:681px;top:435px;width:16px;height:16px;background:#d4d0c8"></div>
<div class="a" style="left:681px;top:435px;width:15px;height:1px;background:#d4d0c8"></div>
<div class="a" style="left:681px;top:435px;width:1px;height:15px;background:#d4d0c8"></div>
<div class="a" style="left:682px;top:436px;width:13px;height:1px;background:#fff"></div>
<div class="a" style="left:682px;top:436px;width:1px;height:13px;background:#fff"></div>
<div class="a" style="left:681px;top:450px;width:16px;height:1px;background:#404040"></div>
<div class="a" style="left:696px;top:435px;width:1px;height:16px;background:#404040"></div>
<div class="a" style="left:682px;top:449px;width:14px;height:1px;background:#808080"></div>
<div class="a" style="left:695px;top:436px;width:1px;height:14px;background:#808080"></div>
<svg style="left:681px;top:435px" width="16" height="16" viewBox="0 0 16 16" ><path d="M4 8 L11 8 L7.5 4.5 Z" fill="#808080"/><rect x="5" y="9" width="8" height="1" fill="#fff"/></svg>
<div class="a" style="left:681px;top:451px;width:16px;height:40px;background:#d4d0c8"></div>
<div class="a" style="left:681px;top:451px;width:15px;height:1px;background:#d4d0c8"></div>
<div class="a" style="left:681px;top:451px;width:1px;height:39px;background:#d4d0c8"></div>
<div class="a" style="left:682px;top:452px;width:13px;height:1px;background:#fff"></div>
<div class="a" style="left:682px;top:452px;width:1px;height:37px;background:#fff"></div>
<div class="a" style="left:681px;top:490px;width:16px;height:1px;background:#404040"></div>
<div class="a" style="left:696px;top:451px;width:1px;height:40px;background:#404040"></div>
<div class="a" style="left:682px;top:489px;width:14px;height:1px;background:#808080"></div>
<div class="a" style="left:695px;top:452px;width:1px;height:38px;background:#808080"></div>
<div class="a" style="left:681px;top:491px;width:16px;height:16px;background:#d4d0c8"></div>
<div class="a" style="left:681px;top:491px;width:15px;height:1px;background:#d4d0c8"></div>
<div class="a" style="left:681px;top:491px;width:1px;height:15px;background:#d4d0c8"></div>
<div class="a" style="left:682px;top:492px;width:13px;height:1px;background:#fff"></div>
<div class="a" style="left:682px;top:492px;width:1px;height:13px;background:#fff"></div>
<div class="a" style="left:681px;top:506px;width:16px;height:1px;background:#404040"></div>
<div class="a" style="left:696px;top:491px;width:1px;height:16px;background:#404040"></div>
<div class="a" style="left:682px;top:505px;width:14px;height:1px;background:#808080"></div>
<div class="a" style="left:695px;top:492px;width:1px;height:14px;background:#808080"></div>
<svg style="left:681px;top:491px" width="16" height="16" viewBox="0 0 16 16" ><path d="M4 5 L11 5 L7.5 8.5 Z" fill="#808080"/><path d="M7.5 9.5 L11.5 5.5" stroke="#fff" stroke-width="1"/></svg>
<div class="a" style="left:16px;top:507px;width:16px;height:16px;background:#d4d0c8"></div>
<div class="a" style="left:16px;top:507px;width:15px;height:1px;background:#d4d0c8"></div>
<div class="a" style="left:16px;top:507px;width:1px;height:15px;background:#d4d0c8"></div>
<div class="a" style="left:17px;top:508px;width:13px;height:1px;background:#fff"></div>
<div class="a" style="left:17px;top:508px;width:1px;height:13px;background:#fff"></div>
<div class="a" style="left:16px;top:522px;width:16px;height:1px;background:#404040"></div>
<div class="a" style="left:31px;top:507px;width:1px;height:16px;background:#404040"></div>
<div class="a" style="left:17px;top:521px;width:14px;height:1px;background:#808080"></div>
<div class="a" style="left:30px;top:508px;width:1px;height:14px;background:#808080"></div>
<svg style="left:16px;top:507px" width="16" height="16" viewBox="0 0 16 16" ><path d="M8.5 4 L8.5 11 L5 7.5 Z" fill="#808080"/><path d="M9.5 11.5 L9.5 4.5" stroke="#fff" stroke-width="1"/></svg>
<div class="a" style="left:32px;top:507px;width:526px;height:16px;background:#d4d0c8"></div>
<div class="a" style="left:32px;top:507px;width:525px;height:1px;background:#d4d0c8"></div>
<div class="a" style="left:32px;top:507px;width:1px;height:15px;background:#d4d0c8"></div>
<div class="a" style="left:33px;top:508px;width:523px;height:1px;background:#fff"></div>
<div class="a" style="left:33px;top:508px;width:1px;height:13px;background:#fff"></div>
<div class="a" style="left:32px;top:522px;width:526px;height:1px;background:#404040"></div>
<div class="a" style="left:557px;top:507px;width:1px;height:16px;background:#404040"></div>
<div class="a" style="left:33px;top:521px;width:524px;height:1px;background:#808080"></div>
<div class="a" style="left:556px;top:508px;width:1px;height:14px;background:#808080"></div>
<div class="a" style="left:558px;top:507px;width:107px;height:16px;background:#e8e6e2"></div>
<div class="a" style="left:665px;top:507px;width:16px;height:16px;background:#d4d0c8"></div>
<div class="a" style="left:665px;top:507px;width:15px;height:1px;background:#d4d0c8"></div>
<div class="a" style="left:665px;top:507px;width:1px;height:15px;background:#d4d0c8"></div>
<div class="a" style="left:666px;top:508px;width:13px;height:1px;background:#fff"></div>
<div class="a" style="left:666px;top:508px;width:1px;height:13px;background:#fff"></div>
<div class="a" style="left:665px;top:522px;width:16px;height:1px;background:#404040"></div>
<div class="a" style="left:680px;top:507px;width:1px;height:16px;background:#404040"></div>
<div class="a" style="left:666px;top:521px;width:14px;height:1px;background:#808080"></div>
<div class="a" style="left:679px;top:508px;width:1px;height:14px;background:#808080"></div>
<svg style="left:665px;top:507px" width="16" height="16" viewBox="0 0 16 16" shape-rendering="crispEdges"><path d="M5 4 L5 11 L9 7.5 Z" fill="#000"/></svg>
<div class="a" style="left:681px;top:507px;width:16px;height:16px;background:#d4d0c8"></div>
<div class="a" style="left:9px;top:537px;width:308px;height:1px;background:#808080"></div>
<div class="a" style="left:9px;top:537px;width:1px;height:15px;background:#808080"></div>
<div class="a" style="left:9px;top:552px;width:309px;height:1px;background:#fff"></div>
<div class="a" style="left:317px;top:537px;width:1px;height:16px;background:#fff"></div>
<div class="a" style="left:322px;top:537px;width:62px;height:1px;background:#808080"></div>
<div class="a" style="left:322px;top:537px;width:1px;height:15px;background:#808080"></div>
<div class="a" style="left:322px;top:552px;width:63px;height:1px;background:#fff"></div>
<div class="a" style="left:384px;top:537px;width:1px;height:16px;background:#fff"></div>
<div class="a" style="left:389px;top:537px;width:22px;height:1px;background:#808080"></div>
<div class="a" style="left:389px;top:537px;width:1px;height:15px;background:#808080"></div>
<div class="a" style="left:389px;top:552px;width:23px;height:1px;background:#fff"></div>
<div class="a" style="left:411px;top:537px;width:1px;height:16px;background:#fff"></div>
<div class="a" style="left:415px;top:537px;width:25px;height:1px;background:#808080"></div>
<div class="a" style="left:415px;top:537px;width:1px;height:15px;background:#808080"></div>
<div class="a" style="left:415px;top:552px;width:26px;height:1px;background:#fff"></div>
<div class="a" style="left:440px;top:537px;width:1px;height:16px;background:#fff"></div>
<div class="t" style="left:339px;top:541px;letter-spacing:0.2px">100%</div>
<svg style="left:396px;top:541px" width="8" height="6" viewBox="0 0 8 6" ><path d="M3.5 0 L3.5 5 M1 1.5 L6 3.5 M6 1.5 L1 3.5" stroke="#000" stroke-width="1.2"/></svg>
</body></html>
